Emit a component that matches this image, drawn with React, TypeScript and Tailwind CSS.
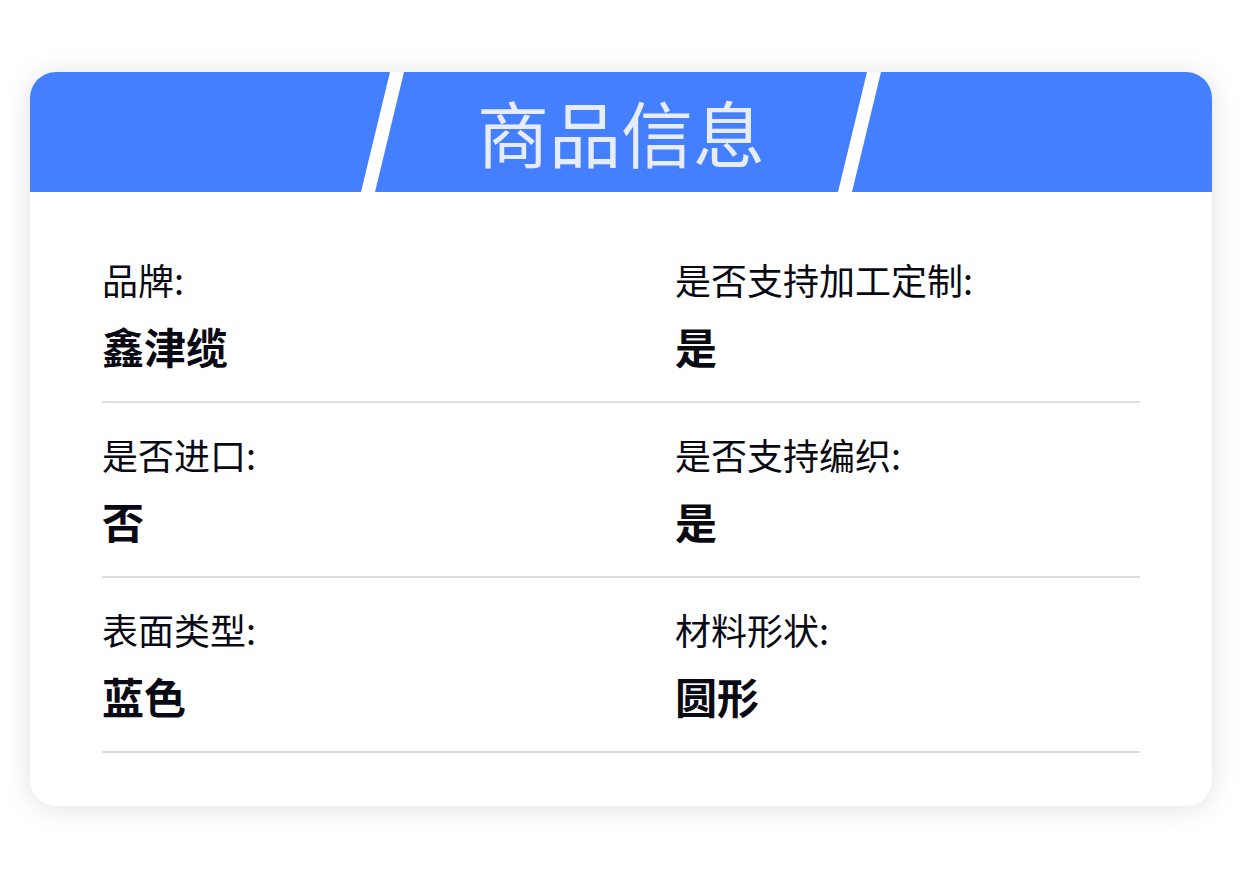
import React from "react";

const font = { fontFamily: '"Noto Sans CJK SC", "Noto Sans", sans-serif' };

const rows: [string, string, string, string][] = [
  ["品牌:", "鑫津缆", "是否支持加工定制:", "是"],
  ["是否进口:", "否", "是否支持编织:", "是"],
  ["表面类型:", "蓝色", "材料形状:", "圆形"],
];

function Field({ label, value }: { label: string; value: string }) {
  return (
    <div className="flex flex-col">
      <span className="text-[36px] leading-[44px] text-[#0a0a14]">{label}</span>
      <span className="mt-[20px] text-[42px] leading-[50px] font-bold text-[#0a0a14]">{value}</span>
    </div>
  );
}

export default function App() {
  return (
    <div className="w-[1242px] h-[877px] bg-white pt-[72px] px-[30px]" style={font}>
      <div className="rounded-[26px] overflow-hidden bg-white shadow-[0_2px_28px_rgba(0,0,0,0.12)]">
        <div className="relative h-[120px] bg-[#437fff] flex items-center justify-center pb-[3px]">
          <svg className="absolute inset-0" width="1182" height="120" viewBox="0 0 1182 120">
            <polygon points="360,0 374,0 345,120 331,120" fill="#ffffff" />
            <polygon points="837,0 851,0 822,120 808,120" fill="#ffffff" />
          </svg>
          <h1 className="relative text-[72px] leading-none text-[#e6ecfb] font-normal">商品信息</h1>
        </div>
        <div className="px-[72px] pt-[36px] pb-[53px]">
          {rows.map(([l1, v1, l2, v2]) => (
            <div
              key={l1}
              className="grid grid-cols-[573px_1fr] pt-[29px] pb-[30px] border-b-2 border-[#dcdce2]"
            >
              <Field label={l1} value={v1} />
              <Field label={l2} value={v2} />
            </div>
          ))}
        </div>
      </div>
    </div>
  );
}
